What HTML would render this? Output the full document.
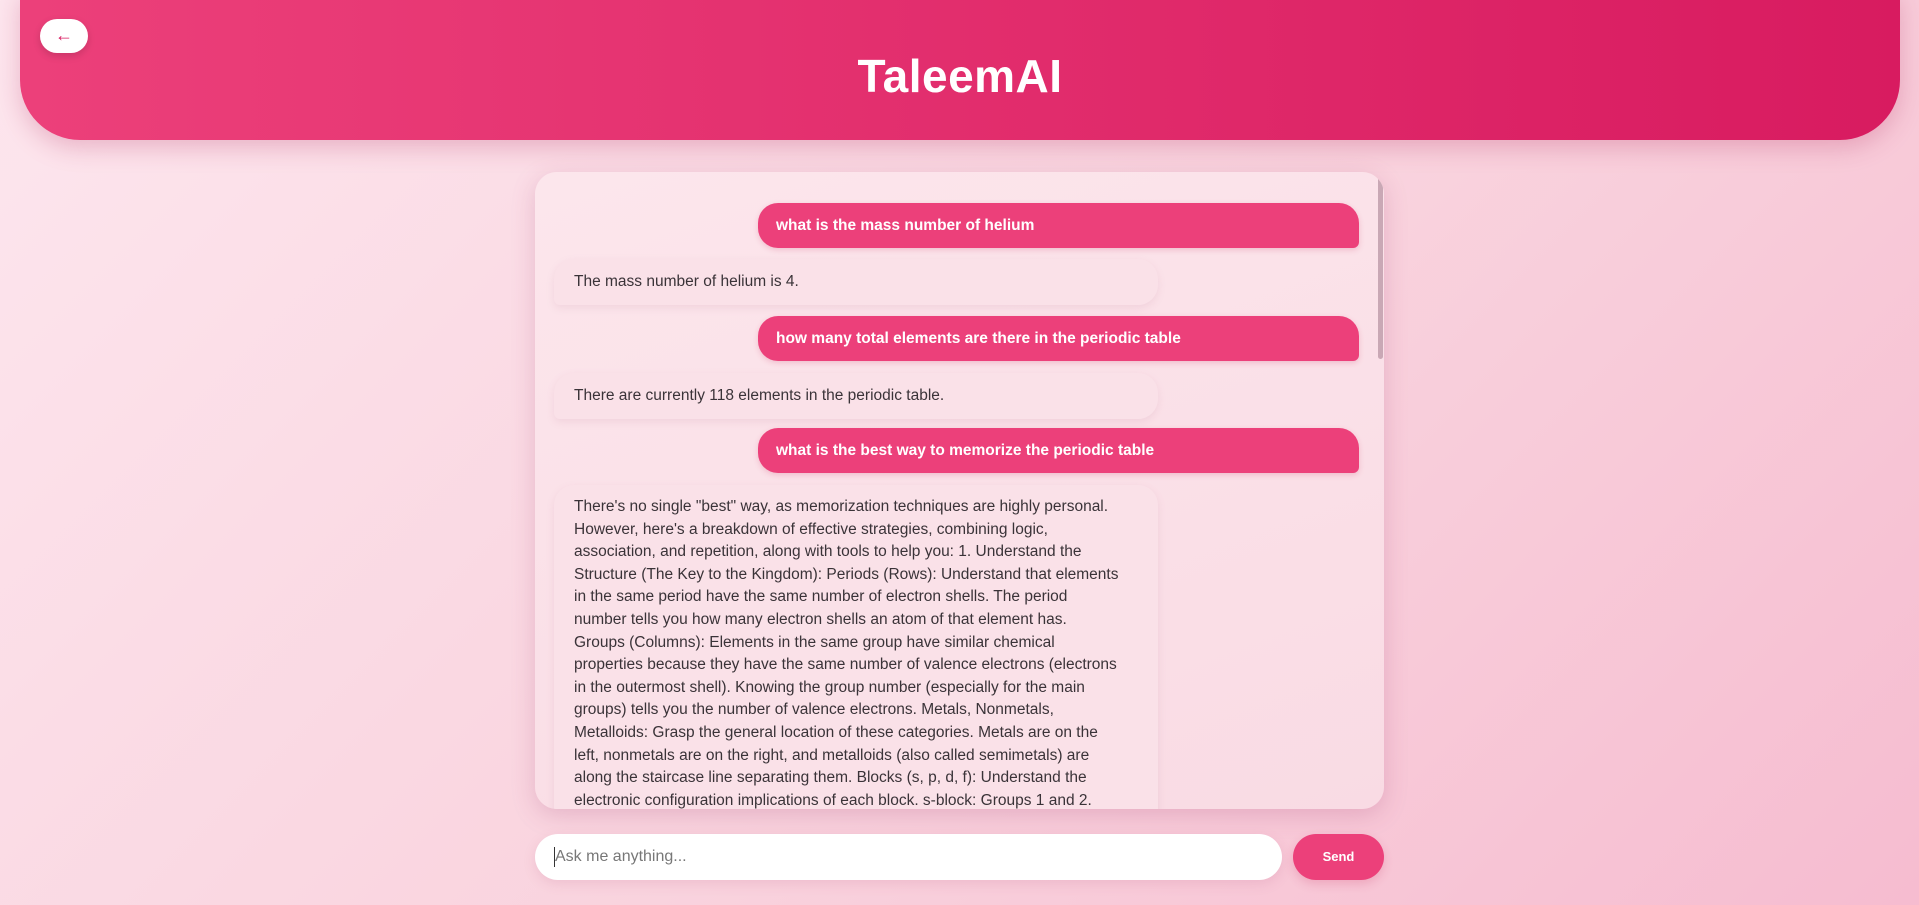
<!DOCTYPE html>
<html><head><meta charset="utf-8"><style>
*{box-sizing:border-box;margin:0;padding:0}
html,body{width:1919px;height:905px;overflow:hidden}
body{font-family:"Liberation Sans",sans-serif;background:linear-gradient(135deg,#fde6ee 0%,#f9d3de 55%,#f6bcd0 100%);position:relative}
.hdr{position:absolute;left:20px;top:-10px;width:1880px;height:150px;border-radius:0 0 60px 60px;background:linear-gradient(90deg,#ec407a,#d81b60);box-shadow:0 8px 24px rgba(180,40,90,.25)}
.hdr h1{position:absolute;left:0;right:0;top:59px;text-align:center;color:#fff;font-size:46px;font-weight:bold;letter-spacing:0.5px}
.back{position:absolute;left:40px;top:19px;width:48px;height:34px;border-radius:17px;background:#fff;color:#d81b60;text-align:center;line-height:32px;font-size:18px;box-shadow:0 3px 8px rgba(0,0,0,.15)}
.chat{position:absolute;left:535px;top:172px;width:849px;height:637px;border-radius:22px;background:linear-gradient(160deg,#fce6ec,#f9dbe4);box-shadow:0 6px 24px rgba(160,60,110,.22);overflow:hidden}
.sb{position:absolute;right:1px;top:1px;width:5px;height:186px;background:#c9a8b5;border-radius:3px}
.u,.b{position:absolute;font-size:15.5px;line-height:23.5px;padding:11px 18px;border-radius:20px}
.u{left:223px;width:601px;height:45px;background:#ec407a;color:#fff;font-weight:bold;border-radius:20px 20px 6px 20px;box-shadow:0 2px 6px rgba(200,40,90,.2)}
.b{left:19px;width:604px;background:#fae1e8;color:#3a3338;border-radius:20px 20px 20px 6px;box-shadow:0 3px 8px rgba(190,120,150,.15);padding-left:20px}
.b div{white-space:nowrap}
.long{line-height:22.6px}
.in{position:absolute;left:535px;top:834px;width:747px;height:46px;border-radius:23px;background:#fff;box-shadow:0 4px 12px rgba(180,80,120,.15);font-size:16px;color:#777;padding:14px 20px;line-height:18px}
.in:before{content:"";position:absolute;left:19px;top:13px;width:1px;height:20px;background:#333}
.send{position:absolute;left:1293px;top:834px;width:91px;height:46px;border-radius:23px;background:#ec407a;color:#fff;font-weight:bold;font-size:13px;text-align:center;line-height:46px;box-shadow:0 4px 10px rgba(200,40,90,.2)}
</style></head><body>
<div class="hdr"><h1>TaleemAI</h1></div>
<div class="back">&#8592;</div>
<div class="chat">
<div class="sb"></div>
<div class="u" style="top:31px">what is the mass number of helium</div>
<div class="b" style="top:87px;height:46px">The mass number of helium is 4.</div>
<div class="u" style="top:144px">how many total elements are there in the periodic table</div>
<div class="b" style="top:201px;height:46px">There are currently 118 elements in the periodic table.</div>
<div class="u" style="top:256px">what is the best way to memorize the periodic table</div>
<div class="b long" style="top:313px;height:420px;padding-top:11px">
<div>There's no single "best" way, as memorization techniques are highly personal.</div>
<div>However, here's a breakdown of effective strategies, combining logic,</div>
<div>association, and repetition, along with tools to help you: 1. Understand the</div>
<div>Structure (The Key to the Kingdom): Periods (Rows): Understand that elements</div>
<div>in the same period have the same number of electron shells. The period</div>
<div>number tells you how many electron shells an atom of that element has.</div>
<div>Groups (Columns): Elements in the same group have similar chemical</div>
<div>properties because they have the same number of valence electrons (electrons</div>
<div>in the outermost shell). Knowing the group number (especially for the main</div>
<div>groups) tells you the number of valence electrons. Metals, Nonmetals,</div>
<div>Metalloids: Grasp the general location of these categories. Metals are on the</div>
<div>left, nonmetals are on the right, and metalloids (also called semimetals) are</div>
<div>along the staircase line separating them. Blocks (s, p, d, f): Understand the</div>
<div>electronic configuration implications of each block. s-block: Groups 1 and 2.</div>
<div>p-block: Groups 13-18.</div>
</div>
</div>
<div class="in">Ask me anything...</div>
<div class="send">Send</div>
</body></html>
